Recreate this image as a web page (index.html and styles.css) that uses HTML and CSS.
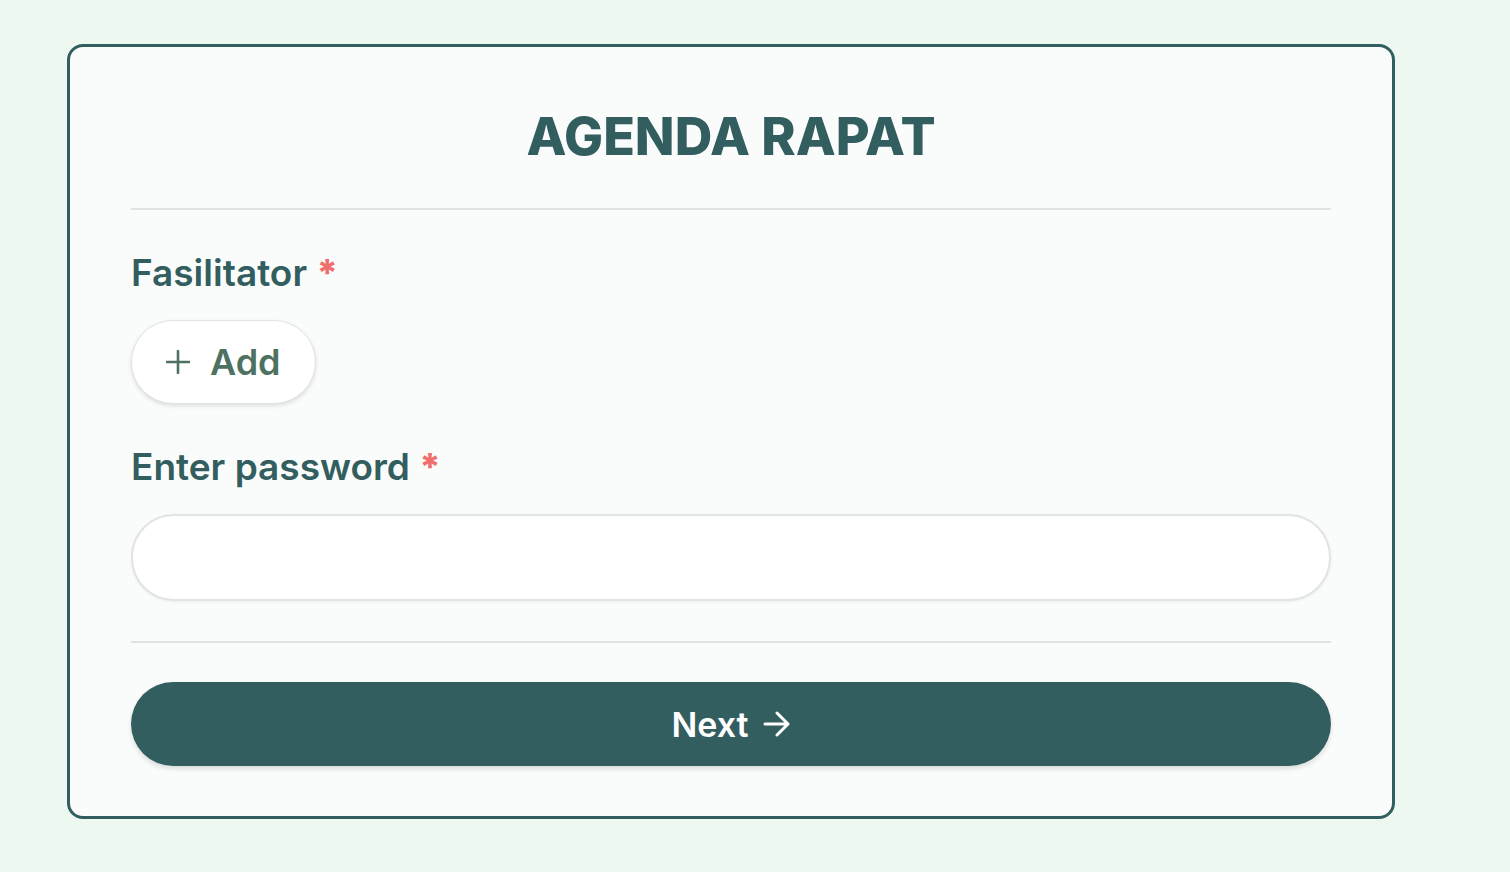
FILE: index.html
```html
<!DOCTYPE html>
<html lang="en">
<head>
  <meta charset="UTF-8">
  <meta name="viewport" content="width=device-width, initial-scale=1.0">
  <title>Agenda Rapat</title>
  <link rel="stylesheet" href="styles.css">
</head>
<body>
  <div class="card">
    <h2 class="title">AGENDA RAPAT</h2>
    <hr class="divider">
    <form class="agenda-form">
      <label class="field-label">Fasilitator <span class="req">*</span></label>
      <button type="button" class="add-button">
        <svg class="plus" width="24" height="24" viewBox="0 0 24 24">
          <path d="M12 1v22M1 12h22" stroke="currentColor" stroke-width="2.6" stroke-linecap="round" fill="none"/>
        </svg>
        <span>Add</span>
      </button>
      <label class="field-label" for="password">Enter password <span class="req">*</span></label>
      <input type="password" id="password" class="text-input">
      <hr class="divider bottom">
      <button type="submit" class="next-button">
        <span>Next</span>
        <svg width="28" height="26" viewBox="0 0 28 26">
          <path d="M2 13h23M14 2l11 11-11 11" stroke="currentColor" stroke-width="3" stroke-linecap="round" stroke-linejoin="round" fill="none"/>
        </svg>
      </button>
    </form>
  </div>
</body>
</html>
```

FILE: styles.css
```css
body {
  margin: 0;
  padding: 44px 0 0 67px;
  background-color: #edf9f0;
  font-family: Inter, "Noto Sans", sans-serif;
  color: #325e5f;
}
.card {
  width: 1322px;
  box-sizing: content-box;
  background: #fafcfb;
  border: 3px solid #325e5f;
  border-radius: 16px;
  padding: 59px 0 50px;
}
.title {
  margin: 0 61px;
  text-align: center;
  font-size: 52px;
  line-height: 62px;
  font-weight: 800;
}
.divider {
  margin: 40px 61px 0;
  border: none;
  border-top: 2px solid #dde3e2;
  height: 0;
}
.agenda-form {
  display: flex;
  flex-direction: column;
  align-items: flex-start;
  margin: 0 61px;
}
.field-label {
  margin-top: 41px;
  font-size: 37px;
  line-height: 44px;
  font-weight: 600;
}
.req {
  color: #f26d6d;
  font-weight: 800;
}
.add-button {
  margin-top: 25px;
  display: flex;
  align-items: center;
  gap: 20px;
  height: 84px;
  padding: 0 34px;
  background: #fff;
  border: 1px solid #e1e4e4;
  border-radius: 42px;
  box-shadow: 0 2px 4px rgba(0, 0, 0, 0.12);
  color: #4d7262;
  font-family: inherit;
  font-size: 36px;
  font-weight: 600;
}
.text-input {
  margin-top: 25px;
  width: 100%;
  height: 87px;
  box-sizing: border-box;
  background: #fff;
  border: 2px solid #e1e4e4;
  border-radius: 43px;
  box-shadow: 0 1px 3px rgba(0, 0, 0, 0.06);
}
.divider.bottom {
  margin: 40px 0 0;
  width: 100%;
}
.next-button {
  margin-top: 39px;
  width: 100%;
  height: 84px;
  display: flex;
  align-items: center;
  justify-content: center;
  gap: 14px;
  background: #325e5f;
  color: #fff;
  border: none;
  border-radius: 42px;
  box-shadow: 0 3px 5px rgba(0, 0, 0, 0.12);
  font-family: inherit;
  font-size: 34px;
  font-weight: 600;
}
```
